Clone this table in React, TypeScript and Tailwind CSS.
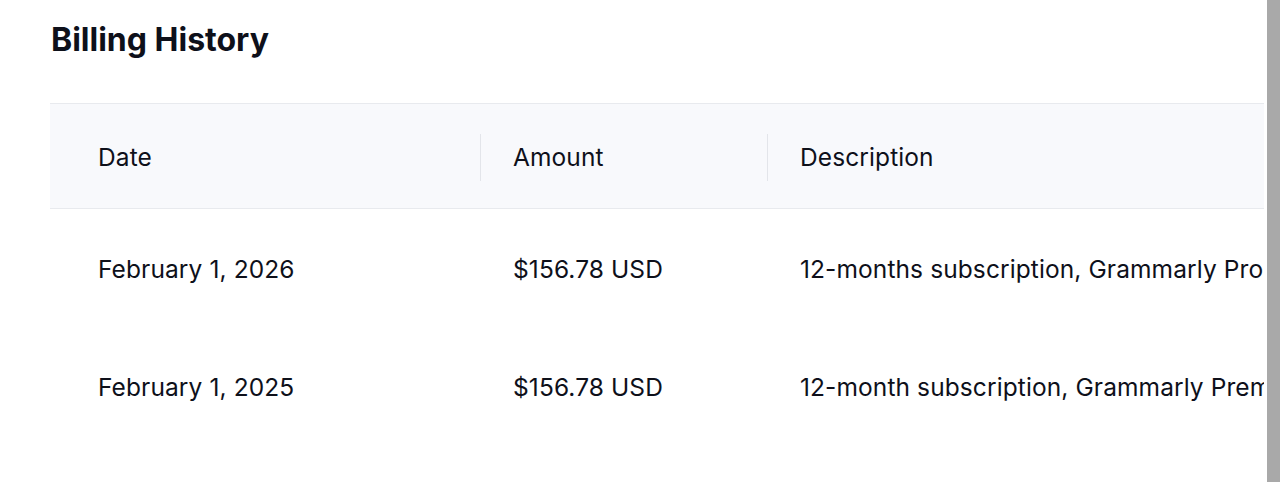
import React from "react";

const rows = [
  { date: "February 1, 2026", amount: "$156.78 USD", desc: "12-months subscription, Grammarly Pro" },
  { date: "February 1, 2025", amount: "$156.78 USD", desc: "12-month subscription, Grammarly Premium" },
];

export default function App() {
  return (
    <div className="flex h-[482px] w-[1280px] overflow-hidden bg-white text-[#1a1a1a]" style={{ fontFamily: "Inter, 'Noto Sans', sans-serif" }}>
      <div className="flex-1 overflow-hidden pl-[50px] min-w-0">
        <h1 className="pt-[20px] pl-[1px] text-[32px] font-bold leading-[40px] text-[#0e101a]">Billing History</h1>
        <div className="mt-[43px] w-[1300px]">
          <div className="flex h-[106px] items-center border-y border-[#e8eaee] bg-[#f8f9fc] pt-[3px] text-[24.5px] tracking-[0.1px] text-[#0e101a]">
            <div className="w-[430px] pl-[48px]">Date</div>
            <div className="flex h-[47px] w-[287px] items-center border-l border-[#e3e5ea] pl-[32px]">Amount</div>
            <div className="flex h-[47px] flex-1 items-center border-l border-[#e3e5ea] pl-[32px]">Description</div>
          </div>
          {rows.map((r) => (
            <div key={r.date} className="flex h-[118px] items-center pt-[2px] text-[24.5px] tracking-[0.1px] text-[#0e101a]">
              <div className="w-[430px] pl-[48px]">{r.date}</div>
              <div className="w-[287px] pl-[33px]">{r.amount}</div>
              <div className="flex-1 whitespace-nowrap pl-[33px]">{r.desc}</div>
            </div>
          ))}
        </div>
      </div>
      <div className="w-[3px] bg-white" />
      <div className="w-[13px] bg-[#a9a9a9]" />
    </div>
  );
}
